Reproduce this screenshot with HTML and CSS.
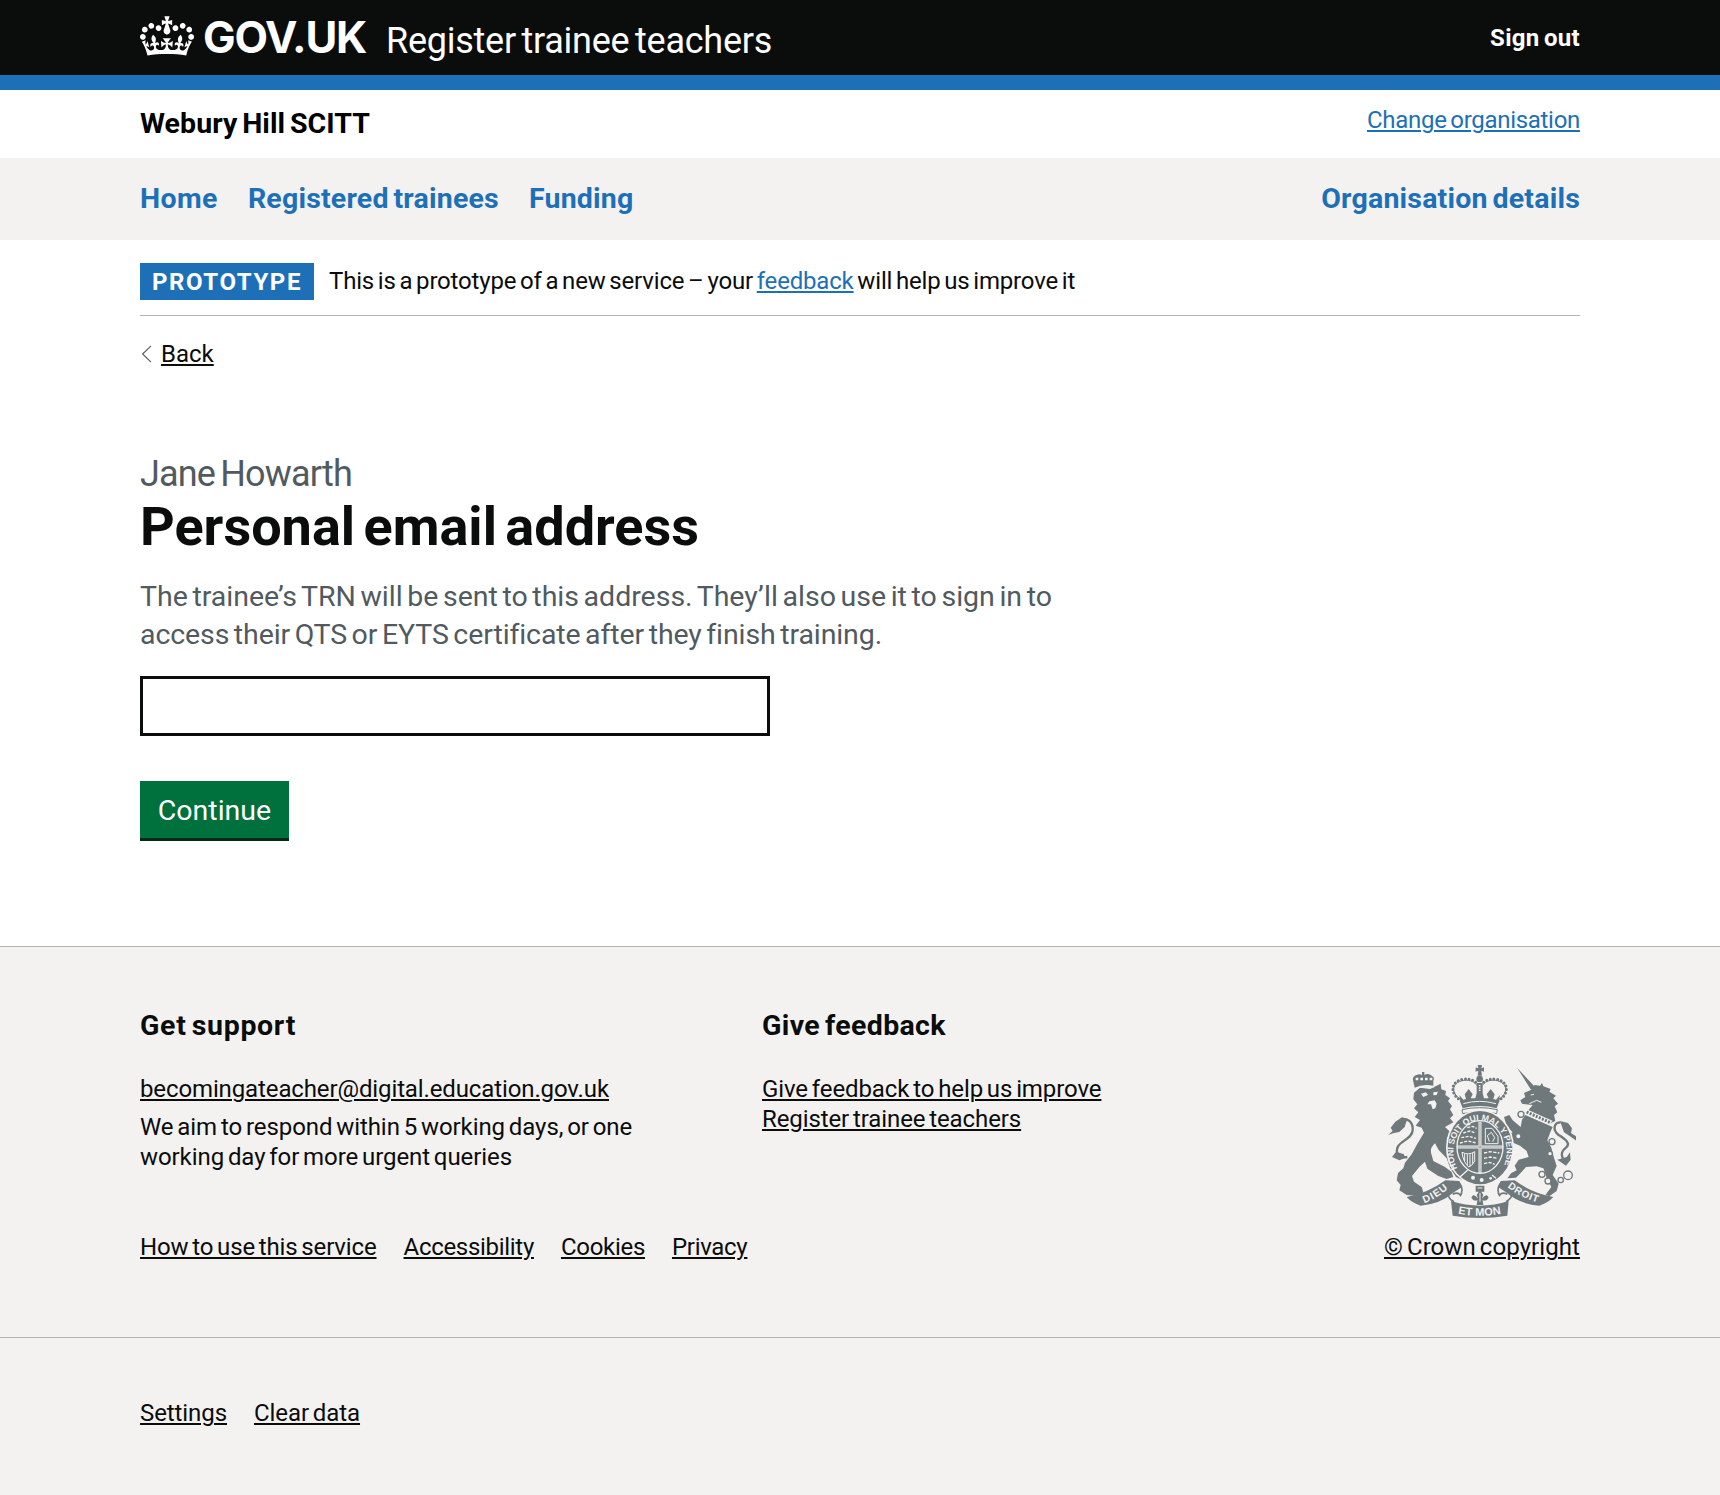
FILE: index.html
```html
<!DOCTYPE html>
<html lang="en">
<head>
<meta charset="utf-8">
<title>Personal email address - Register trainee teachers</title>
<link rel="stylesheet" href="styles.css">
</head>
<body>
<header class="header">
  <div class="container header-row">
    <a class="logo" href="#">
      <svg class="crown" viewBox="0 0 132 97" width="54" height="40" aria-hidden="true"><path fill="currentColor" fill-rule="evenodd" d="M25 30.2c3.5 1.5 7.7-.2 9.1-3.7 1.5-3.6-.2-7.8-3.9-9.2-3.6-1.4-7.6.3-9.1 3.9-1.4 3.5.3 7.5 3.9 9zM9 39.5c3.6 1.5 7.8-.2 9.2-3.7 1.5-3.6-.2-7.8-3.9-9.1-3.6-1.5-7.6.2-9.1 3.8-1.4 3.5.3 7.5 3.8 9zM4.4 57.2c3.5 1.5 7.7-.2 9.1-3.8 1.5-3.6-.2-7.7-3.9-9.1-3.5-1.5-7.6.3-9.1 3.8-1.4 3.5.3 7.6 3.9 9.1zm38.3-21.4c3.5 1.5 7.7-.2 9.1-3.8 1.5-3.6-.2-7.7-3.9-9.1-3.6-1.5-7.6.3-9.1 3.8-1.3 3.6.4 7.7 3.9 9.1zm64.4-5.6c-3.6 1.5-7.8-.2-9.1-3.7-1.5-3.6.2-7.8 3.8-9.2 3.6-1.4 7.7.3 9.2 3.9 1.3 3.5-.4 7.5-3.9 9zm15.9 9.3c-3.6 1.5-7.7-.2-9.1-3.7-1.5-3.6.2-7.8 3.7-9.1 3.6-1.5 7.7.2 9.2 3.8 1.5 3.5-.3 7.5-3.8 9zm4.7 17.7c-3.6 1.5-7.8-.2-9.2-3.8-1.5-3.6.2-7.7 3.9-9.1 3.6-1.5 7.7.3 9.2 3.8 1.3 3.5-.4 7.6-3.9 9.1zM89.3 35.8c-3.6 1.5-7.8-.2-9.2-3.8-1.4-3.6.2-7.7 3.9-9.1 3.6-1.5 7.7.3 9.2 3.8 1.4 3.6-.3 7.7-3.9 9.1zM69.7 17.7l8.9 4.7V9.3l-8.9 2.8c-.2-.3-.5-.6-.9-.9L72.4 0H59.6l3.5 11.2c-.3.3-.6.5-.9.9l-8.8-2.8v13.1l8.8-4.7c.3.3.6.7.9.9l-5 15.4v.1c-.2.8-.4 1.6-.4 2.4 0 4.1 3.1 7.5 7 8.1h.2c.3 0 .7.1 1 .1.4 0 .7 0 1-.1h.2c4-.6 7.1-4.1 7.1-8.1 0-.8-.1-1.7-.4-2.4V34l-5.1-15.4c.4-.2.7-.6 1-.9zM66 92.8c16.9 0 32.8 1.1 47.1 3.2 4-16.9 8.9-26.7 14-33.5l-9.6-3.4c1 4.9 1.1 7.2 0 10.2-1.5-1.4-3-4.3-4.2-8.7L108.6 76c2.8-2 5-3.2 7.5-3.3-4.4 9.4-10 11.9-13.6 11.2-4.3-.8-6.3-4.6-5.6-7.9 1-4.7 5.7-5.9 8-.5 4.3-8.7-3-11.4-7.6-8.8 7.1-7.2 7.9-13.5 2.1-21.1-8 6.1-8.1 12.3-4.5 20.8-4.7-5.4-12.1-2.5-9.5 6.2 3.4-5.2 7.9-2 7.2 3.1-.6 4.3-6.4 7.8-13.5 7.2-10.3-.9-10.9-8-11.2-13.8 2.5-.5 7.1 1.8 11 7.3L80.2 60c-4.1 4.4-8 5.3-12.3 5.4 1.4-4.4 8-11.6 8-11.6H55.5s6.4 7.2 7.9 11.6c-4.2-.1-8-1-12.3-5.4l1.4 16.4c3.9-5.5 8.5-7.7 10.9-7.3-.3 5.8-.9 12.8-11.1 13.8-7.2.6-12.9-2.9-13.5-7.2-.7-5 3.8-8.3 7.1-3.1 2.7-8.7-4.6-11.6-9.4-6.2 3.7-8.5 3.6-14.7-4.6-20.8-5.8 7.6-5 13.9 2.2 21.1-4.7-2.6-11.9.1-7.7 8.8 2.3-5.5 7.1-4.2 8.1.5.7 3.3-1.3 7.1-5.7 7.9-3.5.7-9-1.8-13.5-11.2 2.5.1 4.7 1.3 7.5 3.3l-4.7-15.4c-1.2 4.4-2.7 7.2-4.3 8.7-1.1-3-.9-5.3 0-10.2l-9.5 3.4c5 6.9 9.9 16.7 14 33.5 14.8-2.1 30.8-3.2 47.7-3.2z"/></svg>
      <span class="logotype">GOV.UK</span>
    </a>
    <a class="service-name" href="#">Register trainee teachers</a>
    <a class="sign-out" href="#">Sign out</a>
  </div>
</header>

<div class="container org-bar">
  <span class="org-name">Webury Hill SCITT</span>
  <a class="change-org" href="#">Change organisation</a>
</div>

<nav class="nav">
  <div class="container nav-row">
    <a class="nav-home" href="#">Home</a>
    <a class="nav-trainees" href="#">Registered trainees</a>
    <a class="nav-funding" href="#">Funding</a>
    <a class="nav-organisation" href="#">Organisation details</a>
  </div>
</nav>

<div class="container">
  <div class="phase">
    <strong class="tag">PROTOTYPE</strong>
    <span class="phase-text">This is a prototype of a new service – your <a href="#">feedback</a> will help us improve it</span>
  </div>
  <a class="back" href="#"><svg class="chevron" viewBox="0 0 11 18" width="11" height="18" aria-hidden="true"><path d="M10 .8 1.6 9 10 17.2" fill="none" stroke="#505a5f" stroke-width="1.1"/></svg><span class="back-text">Back</span></a>
  <main class="main">
    <h1 class="title"><span class="caption">Jane Howarth</span>Personal email address</h1>
    <p class="hint">The trainee’s TRN will be sent to this address. They’ll also use it to sign in to <span class="hint-end">access their QTS or EYTS certificate after they finish training.</span></p>
    <input class="input" type="email" aria-label="Personal email address">
    <button class="button" type="button">Continue</button>
  </main>
</div>

<footer class="footer">
  <div class="container footer-main">
    <div class="footer-left">
      <div class="columns">
        <section>
          <h2 class="support-title">Get support</h2>
          <p><a class="email" href="#">becomingateacher@digital.education.gov.uk</a></p>
          <p class="note">We aim to respond within 5 working days, or one working day for more urgent queries</p>
        </section>
        <section>
          <h2 class="feedback-title">Give feedback</h2>
          <p class="feedback"><a href="#">Give feedback to help us improve Register trainee teachers</a></p>
        </section>
      </div>
      <ul class="links">
        <li class="link-guide"><a href="#">How to use this service</a></li>
        <li><a href="#">Accessibility</a></li>
        <li><a href="#">Cookies</a></li>
        <li><a href="#">Privacy</a></li>
      </ul>
    </div>
    <div class="meta">
      <svg class="arms" viewBox="54 42 564 459" width="188" height="153" fill="#6f797c" aria-hidden="true">
        <defs>
          <path id="garter" d="M262 352A80 94 0 1 1 397 354"/>
          <path id="dieu" d="M163 456Q200 444 240 408"/>
          <path id="mon" d="M264 488Q330 501 400 487"/>
          <path id="droit" d="M412 408Q450 440 512 457"/>
        </defs>
        <!-- lion -->
        <path d="M132 125 150 110 180 114 212 98 214 115 228 120 226 132 240 142 234 150 246 165 240 175 250 192 240 202 250 214 225 228 243 245 230 262 248 290 243 310 262 330 264 350 286 370 276 386 258 378 240 350 230 322 206 297 195 277Q180 290 183 305L190 330 225 348 245 363 250 378 230 384 205 375 172 353 165 332 148 348 126 375 132 392 155 408 160 424 140 434 110 432 88 418 92 402 80 388 84 366 100 352 105 335 125 310 140 282 162 245 155 230 137 224 150 207 134 198 145 184 132 172 142 160 130 145Z"/>
        <path d="M134 110 129 88Q126 76 140 72 148 68 156 72V63H163V72Q172 66 182 72 196 78 190 90L190 104Q158 98 134 110Z"/>
        <path d="M112 318C88 322 74 305 84 286 95 268 126 262 128 238 130 214 112 199 96 208" fill="none" stroke="#6f797c" stroke-width="7"/>
        <path d="M54 252 68 240 62 230 76 212 96 199 112 203 104 228 88 243 72 246ZM66 318 78 302 102 310 104 322 88 328Z"/>
        <path d="M153 128 168 124 174 132 160 138ZM190 124 204 122 200 132 190 133ZM178 151 194 148 200 158 196 172 188 175 183 160 172 160Z" fill="#f3f2f1"/>
        <path d="M137 84h50" stroke="#f3f2f1" stroke-width="8" stroke-dasharray="8 6"/>
        <path d="M134 113Q160 102 192 108" fill="none" stroke="#f3f2f1" stroke-width="3"/>
        <!-- unicorn -->
        <path d="M441 50 493 106 483 116ZM451 148 466 138 462 126 484 116 494 102 510 104 516 96 520 106 542 114 538 122 558 134 550 142 564 158 554 166 562 184 552 192 556 210 538 218 470 184 488 162 466 160 456 158Z"/>
        <path d="M482 132 492 130M478 158 500 148 514 154" stroke="#f3f2f1" stroke-width="3" fill="none"/>
        <path d="M466 192 548 228 540 246 532 268 544 290 552 320 560 345 548 372 566 398 560 420 538 436 526 432 544 408 530 380 520 352 500 346 468 348 452 366 438 380 412 382 424 366 440 358 434 344 446 326 476 318 470 300 450 284 426 274 412 252 428 244 410 226 402 198 418 192 432 214 424 204 452 228 456 206Z"/>
        <path d="M470 183 544 216" stroke="#f3f2f1" stroke-width="15"/>
        <path d="M470 183 544 216" stroke="#6f797c" stroke-width="9" stroke-dasharray="6 4"/>
        <path d="M590 334C570 318 572 302 588 290 604 276 584 264 566 252 546 236 552 214 572 214" fill="none" stroke="#6f797c" stroke-width="7"/>
        <path d="M570 210 594 216 606 232 603 246 618 256 620 270 600 256 582 244ZM562 326 590 318 600 304 602 326 588 344Z"/>
        <g fill="#f3f2f1" stroke="#6f797c" stroke-width="4"><circle cx="453" cy="190" r="9"/><circle cx="445" cy="256" r="8"/><circle cx="546" cy="272" r="9"/><circle cx="540" cy="308" r="7"/><circle cx="516" cy="370" r="9"/><circle cx="534" cy="390" r="9"/><circle cx="572" cy="387" r="8"/><circle cx="594" cy="373" r="13"/></g>
        <!-- crown -->
        <path d="M323 42h13l-2 10 8-3v13l-8-3 2 15h-13l2-15-8 3V49l8 3Z"/>
        <circle cx="329" cy="84" r="10"/>
        <path d="M280 150C240 130 242 94 282 88 302 86 316 94 321 104M378 150C418 130 416 94 376 88 356 86 342 94 337 104" fill="none" stroke="#6f797c" stroke-width="3"/>
        <path d="M274 150C238 128 240 90 282 84 304 82 316 92 321 98M384 150C420 128 418 90 376 84 354 82 342 92 337 98" fill="none" stroke="#6f797c" stroke-width="9" stroke-linecap="round" stroke-dasharray="0 11"/>
        <path d="M320 96h18v30h-18Z"/><path d="M329 102v20" stroke="#f3f2f1" stroke-width="5" stroke-dasharray="4 3"/>
        <path d="M272 156 268 132 280 146 288 144 284 130 296 114 308 130 302 142 316 142 320 126H338L342 142 356 142 350 130 362 114 374 130 370 144 378 146 390 132 386 156 380 172Q329 158 278 172Z"/>
        <path d="M280 158Q329 144 378 158" fill="none" stroke="#f3f2f1" stroke-width="3"/>
        <path d="M276 176Q329 164 382 176L380 188Q329 176 278 188Z" fill="#f3f2f1" stroke="#6f797c" stroke-width="3"/>
        <!-- garter and shield -->
        <ellipse cx="330" cy="290" rx="102" ry="114" fill="#f3f2f1"/>
        <ellipse cx="330" cy="290" rx="97" ry="110"/>
        <ellipse cx="330" cy="288" rx="69" ry="79" stroke="#f3f2f1" stroke-width="4"/>
        <g stroke="#f3f2f1" fill="none">
          <path d="M330 212V366M262 288H398" stroke-width="9"/>
          <path d="M330 214V364M264 288H396" stroke="#6f797c" stroke-width="2"/>
          <path d="M280 246 300 240 316 246M274 260 296 256 318 262M270 276 294 270 320 276M292 230 308 226 320 232" stroke-width="4" stroke-dasharray="9 4"/>
          <path d="M342 306 360 302 388 306M342 322 362 318 382 322M342 338 358 334 374 340" stroke-width="4" stroke-dasharray="10 4"/>
          <path d="M346 232H366L384 256V278H346ZM358 272 352 254 364 244 374 260 368 272" stroke-width="3"/>
          <path d="M276 304Q296 314 314 302V330Q306 346 296 348 280 334 276 304ZM284 308V330M292 310V342M300 310V346M308 306V338" stroke-width="3"/>
        </g>
        <text class="motto" font-size="26"><textPath href="#garter" textLength="365">HONI SOIT QUI MAL Y PENSE</textPath></text>
        <path d="M270 378 294 356 M366 372 378 382" stroke="#f3f2f1" stroke-width="4"/>
        <circle cx="309" cy="380" r="6" fill="#f3f2f1"/><circle cx="335" cy="387" r="6" fill="#f3f2f1"/><circle cx="362" cy="382" r="4" fill="#f3f2f1"/>
        <!-- ribbon -->
        <path d="M110 438Q175 426 226 388L268 390 276 408 252 424Q210 460 152 464Q126 456 110 438ZM550 438Q485 426 434 388L392 390 384 408 408 424Q450 460 508 464Q534 456 550 438Z"/>
        <path d="M270 398Q282 418 270 436M390 398Q378 418 390 436M238 420Q228 440 252 452M422 420Q432 440 408 452M272 432Q262 422 248 430M388 432Q398 422 412 430" fill="none" stroke="#6f797c" stroke-width="5"/>
        <path d="M243 450Q330 478 416 450L412 494Q330 508 248 494Z"/>
        <path d="M317 404h26v18h-26ZM330 416 340 432 336 442Q352 424 356 440 350 452 338 448L340 462H320L322 448Q310 452 304 440 308 424 324 442L320 432Z"/>
        <path d="M323 411h14M330 426v26" stroke="#f3f2f1" stroke-width="3"/>
        <text class="motto" font-size="31"><textPath href="#dieu" textLength="84">DIEU</textPath></text>
        <text class="motto" font-size="33"><textPath href="#mon" textLength="130">ET MON</textPath></text>
        <text class="motto" font-size="30"><textPath href="#droit" textLength="102">DROIT</textPath></text>
      </svg>
      <a class="copyright" href="#">© Crown copyright</a>
    </div>
  </div>
  <div class="footer-tools">
    <div class="container">
      <ul class="links tools">
        <li><a href="#">Settings</a></li>
        <li><a href="#">Clear data</a></li>
      </ul>
    </div>
  </div>
</footer>
</body>
</html>
```
FILE: styles.css
```css
* { box-sizing: border-box; }
body {
  margin: 0;
  background: #fff;
  color: #0b0c0c;
  font-family: Roboto, "Open Sans", sans-serif;
  font-size: 24px;
  line-height: 30px;
  word-spacing: -2px;
}
a { color: inherit; text-decoration-thickness: 2px; text-underline-offset: 2px; }
h1, h2, p, ul { margin: 0; padding: 0; }
.container { width: 1440px; margin: 0 auto; }

.header { height: 90px; background: #0b0c0c; border-bottom: 15px solid #1d70b8; color: #fff; }
.header a { text-decoration: none; white-space: nowrap; }
.header-row { display: flex; align-items: flex-start; padding-top: 14px; }
.logo { display: flex; align-items: flex-start; width: 246px; gap: 9px; }
.crown { flex: none; margin-top: 2px; }
.logotype { margin-top: -1px; font-family: Inter, Roboto, sans-serif; font-size: 43.5px; line-height: 48px; font-weight: 700; letter-spacing: -1.2px; }
.service-name { margin-top: 5px; font-size: 36px; line-height: 45px; letter-spacing: -.256px; word-spacing: -3px; }
.sign-out { margin: 9px 0 0 auto; font-weight: 700; letter-spacing: .32px; }

.org-bar { display: flex; justify-content: space-between; height: 68px; padding-top: 15px; }
.org-name { color: #000; font-size: 28.5px; line-height: 38px; font-weight: 700; letter-spacing: .076px; word-spacing: -2.4px; }
.change-org { color: #1d70b8; letter-spacing: -.295px; }

.nav { height: 82px; background: #f3f2f1; }
.nav-row { display: flex; gap: 30px; padding-top: 22px; }
.nav a { color: #1d70b8; font-size: 28.5px; line-height: 38px; font-weight: 700; letter-spacing: .2px; word-spacing: -2.4px; text-decoration: none; }
.nav .nav-home { letter-spacing: .4px; }
.nav .nav-organisation { margin-left: auto; }

.phase { display: flex; align-items: flex-start; gap: 15px; height: 76px; padding-top: 23px; border-bottom: 1px solid #b1b4b6; }
.tag { width: 174px; height: 37px; padding: 4px 0 3px 12px; background: #1d70b8; color: #fff; letter-spacing: 1.575px; }
.phase-text { margin-top: 3px; letter-spacing: -.18px; }
.phase-text a { color: #1d70b8; }
.back { display: flex; width: max-content; margin-top: 23px; padding-left: 1px; gap: 9px; text-decoration: none; }
.chevron { margin-top: 6px; }
.back-text { text-decoration: underline 2px; text-underline-offset: 2px; }

.main { display: flex; flex-direction: column; align-items: flex-start; padding: 83px 0 108px; }
.title { font-size: 54px; line-height: 57px; font-weight: 700; word-spacing: -5px; }
.caption { display: block; margin-bottom: 1px; color: #505a5f; font-size: 36px; line-height: 45px; font-weight: 400; letter-spacing: -.82px; word-spacing: -3px; }
.hint { width: 945px; margin-top: 23px; color: #505a5f; font-size: 28.5px; line-height: 38px; letter-spacing: -.016px; word-spacing: -2.4px; }
.hint-end { letter-spacing: -.1px; }
.input { width: 630px; height: 60px; margin-top: 22px; border: 3px solid #0b0c0c; border-radius: 0; background: #fff; }
.button { width: 149px; height: 57px; margin-top: 45px; padding: 2px 0 0; border: 0; background: #00703c; box-shadow: 0 3px 0 #002d18; color: #fff; font: 28.5px/38px Roboto, "Open Sans", sans-serif; }

.footer { background: #f3f2f1; border-top: 1px solid #b1b4b6; }
.footer-main { display: flex; justify-content: space-between; align-items: flex-end; height: 390px; padding: 59px 0 75px; }
.columns { display: grid; grid-template-columns: 532px 400px; column-gap: 90px; }
.footer h2 { margin-bottom: 29px; font-size: 28.5px; line-height: 38px; word-spacing: -2.4px; }
.support-title { letter-spacing: .66px; }
.feedback-title { letter-spacing: .35px; }
.email { letter-spacing: -.119px; }
.note { margin-top: 8.5px; letter-spacing: -.08px; }
.feedback { width: 360px; letter-spacing: -.1px; }
.links { display: flex; gap: 27px; margin-top: 60px; list-style: none; letter-spacing: -.3px; }
.link-guide { letter-spacing: -.143px; }
.meta { display: flex; flex-direction: column; align-items: flex-end; }
.arms { margin: 0 4px 14px 0; }
.copyright { letter-spacing: .075px; }
.motto { font-family: "Liberation Sans", sans-serif; font-weight: 700; fill: #f3f2f1; word-spacing: 0; }
.footer-tools { height: 158px; border-top: 1px solid #b1b4b6; }
.tools { margin-top: 60px; letter-spacing: -.08px; }
```
